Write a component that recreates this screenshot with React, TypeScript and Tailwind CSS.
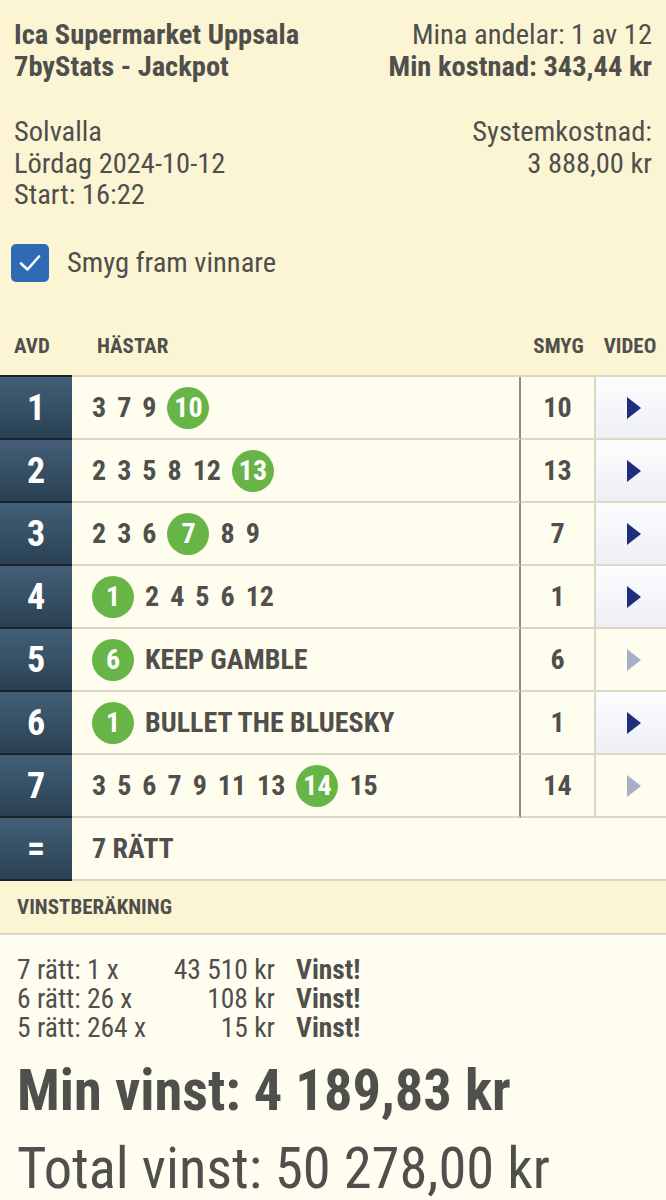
import React from "react";

type Race = {
  avd: string;
  horses: number[];
  winner: number;
  name?: string;
  smyg: number;
  active: boolean;
};

const races: Race[] = [
  { avd: "1", horses: [3, 7, 9, 10], winner: 10, smyg: 10, active: true },
  { avd: "2", horses: [2, 3, 5, 8, 12, 13], winner: 13, smyg: 13, active: true },
  { avd: "3", horses: [2, 3, 6, 7, 8, 9], winner: 7, smyg: 7, active: true },
  { avd: "4", horses: [1, 2, 4, 5, 6, 12], winner: 1, smyg: 1, active: true },
  { avd: "5", horses: [6], winner: 6, name: "KEEP GAMBLE", smyg: 6, active: false },
  { avd: "6", horses: [1], winner: 1, name: "BULLET THE BLUESKY", smyg: 1, active: true },
  { avd: "7", horses: [3, 5, 6, 7, 9, 11, 13, 14, 15], winner: 14, smyg: 14, active: false },
];

const payouts = [
  { label: "7 rätt: 1 x", amount: "43 510 kr" },
  { label: "6 rätt: 26 x", amount: "108 kr" },
  { label: "5 rätt: 264 x", amount: "15 kr" },
];

function Play({ active }: { active: boolean }) {
  return (
    <svg width="14" height="22" viewBox="0 0 14 22">
      <path d="M0 0 L14 11 L0 22 Z" fill={active ? "#1e2d7c" : "#a8afc6"} />
    </svg>
  );
}

function AvdCell({ label }: { label: string }) {
  return (
    <div className="w-[72px] shrink-0 flex items-center justify-center bg-gradient-to-b from-[#435f77] to-[#2a4153] border-b-2 border-[#18232c] text-white font-bold text-[36px]">
      {label}
    </div>
  );
}

function RaceRow({ race }: { race: Race }) {
  return (
    <div className="flex h-[63px]">
      <AvdCell label={race.avd} />
      <div className="flex-1 min-w-0 flex items-center gap-[11px] pl-[20px] border-b-2 border-r-2 border-b-[#dcd8c6] border-r-[#8e8c84] text-[28px] font-bold text-[#4f4f4c] whitespace-nowrap">
        {race.horses.map((h) =>
          h === race.winner ? (
            <span
              key={h}
              className="w-[42px] h-[42px] shrink-0 rounded-full bg-[#67b447] text-white flex items-center justify-center"
            >
              {h}
            </span>
          ) : (
            <span key={h}>{h}</span>
          )
        )}
        {race.name && <span>{race.name}</span>}
      </div>
      <div className="w-[75px] shrink-0 flex items-center justify-center border-b-2 border-r-2 border-b-[#dcd8c6] border-r-[#dcd8c6] text-[28px] font-bold text-[#4f4f4c]">
        {race.smyg}
      </div>
      <div
        className={
          race.active
            ? "w-[70px] shrink-0 flex items-center pl-[31px] border-b-2 border-[#dcd8c6] bg-gradient-to-b from-[#fdfdfe] to-[#edeff5]"
            : "w-[70px] shrink-0 flex items-center pl-[31px] border-b-2 border-[#dcd8c6]"
        }
      >
        <Play active={race.active} />
      </div>
    </div>
  );
}

export default function App() {
  return (
    <div
      className="w-[666px] h-[1200px] overflow-hidden bg-[#fcf5d4] text-[#4f4f4c]"
      style={{ fontFamily: '"Roboto Condensed", Roboto, "Liberation Sans", sans-serif' }}
    >
      <div className="px-[14px] pt-[19px]">
        <div className="flex justify-between leading-[32px] text-[28.5px]">
          <div className="font-bold">
            <div>Ica Supermarket Uppsala</div>
            <div>7byStats - Jackpot</div>
          </div>
          <div className="text-right">
            <div>Mina andelar: 1 av 12</div>
            <div className="font-bold">Min kostnad: 343,44 kr</div>
          </div>
        </div>
        <div className="flex justify-between mt-[33px] leading-[31.5px] text-[28.5px]">
          <div>
            <div>Solvalla</div>
            <div>Lördag 2024-10-12</div>
            <div>Start: 16:22</div>
          </div>
          <div className="text-right">
            <div>Systemkostnad:</div>
            <div>3 888,00 kr</div>
          </div>
        </div>
        <div className="flex items-center gap-[18px] mt-[31px] -ml-[3px]">
          <div className="w-[38px] h-[38px] rounded-[5px] bg-[#2f6bb5] flex items-center justify-center">
            <svg width="24" height="20" viewBox="0 0 24 20" fill="none">
              <path d="M3 10.5 L9.5 16.5 L21 3.5" stroke="white" strokeWidth="2.6" strokeLinecap="round" strokeLinejoin="round" />
            </svg>
          </div>
          <span className="text-[28.5px]">Smyg fram vinnare</span>
        </div>
      </div>

      <div className="flex h-[57px] mt-[34px] items-center text-[21px] font-bold text-[#4f4f4c]">
        <div className="w-[72px] pl-[14px]">AVD</div>
        <div className="flex-1 pl-[25px]">HÄSTAR</div>
        <div className="w-[75px] text-center">SMYG</div>
        <div className="w-[70px] text-center pr-[2px]">VIDEO</div>
      </div>

      <div className="bg-[#fffdee]">
        <div className="flex h-[2px]">
          <div className="w-[72px] bg-[#18232c]" />
          <div className="flex-1 bg-[#dcd8c6]" />
        </div>
        {races.map((r) => (
          <RaceRow key={r.avd} race={r} />
        ))}
        <div className="flex h-[63px]">
          <AvdCell label="=" />
          <div className="flex-1 flex items-center pl-[20px] border-b-2 border-[#dcd8c6] text-[28px] font-bold">
            7 RÄTT
          </div>
        </div>
      </div>

      <div className="h-[54px] flex items-center px-[17px] border-b-2 border-[#d8d5c4] text-[21px] font-bold">
        VINSTBERÄKNING
      </div>

      <div className="bg-[#fffdf0] h-full px-[17px] pt-[20px]">
        <div className="text-[27.5px] leading-[29px] whitespace-nowrap">
          {payouts.map((p) => (
            <div key={p.label} className="flex">
              <span className="w-[150px]">{p.label}</span>
              <span className="w-[108px] text-right">{p.amount}</span>
              <span className="ml-[21px] font-bold">Vinst!</span>
            </div>
          ))}
        </div>
        <div className="mt-[16px] text-[56.5px] leading-[66px] font-bold whitespace-nowrap">Min vinst: 4 189,83 kr</div>
        <div className="mt-[12px] text-[56.5px] leading-[66px] whitespace-nowrap">Total vinst: 50 278,00 kr</div>
      </div>
    </div>
  );
}
